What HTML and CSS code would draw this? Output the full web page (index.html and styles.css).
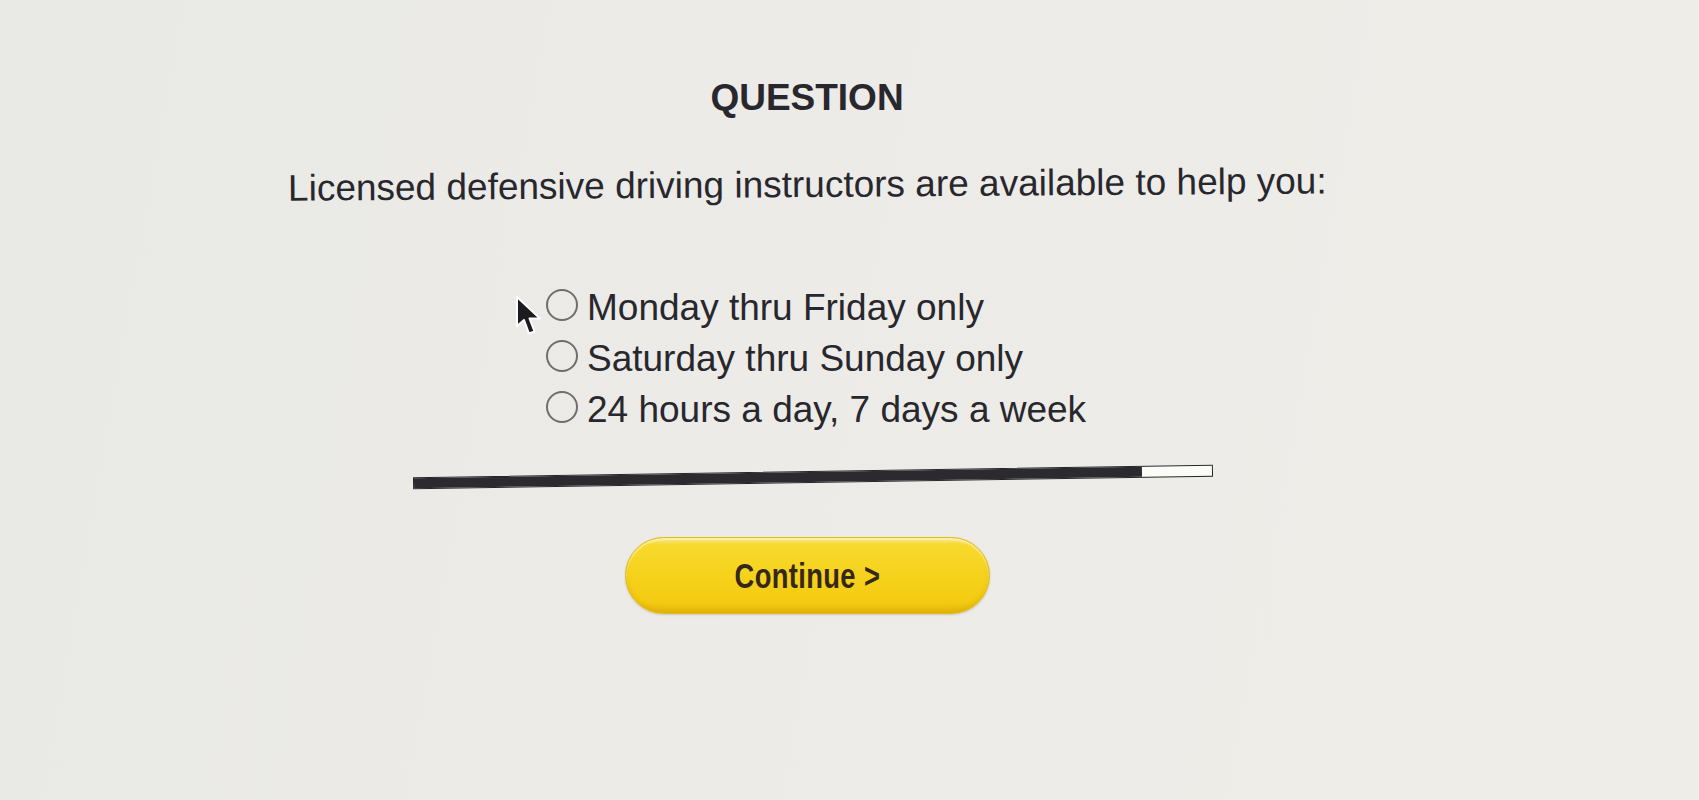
FILE: index.html
```html
<!DOCTYPE html>
<html lang="en">
<head>
<meta charset="utf-8">
<title>Question</title>
<link rel="stylesheet" href="styles.css">
</head>
<body>
<main class="quiz">
  <h1 class="title">QUESTION</h1>
  <p class="prompt">Licensed defensive driving instructors are available to help you:</p>
  <div class="options">
    <svg class="cursor" width="28" height="44" viewBox="0 0 28 44" aria-hidden="true">
      <path d="M2 2 L2 31 L9 25 L14 38.5 L19.5 36.5 L14.5 23.5 L25 23.5 Z" fill="#1c1c20" stroke="#ffffff" stroke-width="2" stroke-linejoin="round"/>
    </svg>
    <label class="option"><span class="radio"></span><span class="label">Monday thru Friday only</span></label>
    <label class="option"><span class="radio"></span><span class="label">Saturday thru Sunday only</span></label>
    <label class="option"><span class="radio"></span><span class="label">24 hours a day, 7 days a week</span></label>
  </div>
  <div class="progress"><div class="progress-fill" style="width: 91.25%"></div></div>
  <button class="continue" type="button"><span class="continue-text">Continue &gt;</span></button>
</main>
</body>
</html>
```

FILE: styles.css
```css
html, body {
  margin: 0;
  padding: 0;
}

body {
  width: 1699px;
  height: 800px;
  overflow: hidden;
  background: linear-gradient(100deg, #e9e9e6 0%, #ecebe7 45%, #eeede8 100%);
  font-family: "Liberation Sans", Arial, sans-serif;
  color: #28272d;
}

.quiz {
  width: 1046px;
  margin-left: 284px;
  padding-top: 76px;
  display: flex;
  flex-direction: column;
  align-items: center;
}

.title {
  margin: 0;
  font-size: 37px;
  line-height: 44px;
  font-weight: bold;
  letter-spacing: 0;
}

.prompt {
  margin: 43px 0 0;
  font-size: 37px;
  line-height: 44px;
  white-space: nowrap;
  transform: rotate(-0.4deg);
}

.options {
  position: relative;
  align-self: flex-start;
  margin-left: 262px;
  margin-top: 75px;
  display: flex;
  flex-direction: column;
}

.option {
  display: flex;
  align-items: center;
  height: 51px;
  font-size: 37px;
  line-height: 51px;
  white-space: nowrap;
}

.radio {
  width: 28px;
  height: 28px;
  border: 2px solid #6e6e70;
  border-radius: 50%;
  margin-right: 9px;
  margin-bottom: 6px;
  background: transparent;
  flex: none;
}

.cursor {
  position: absolute;
  left: -31px;
  top: 13px;
}

.progress {
  margin-top: 36px;
  margin-left: 12px;
  width: 798px;
  height: 10px;
  border: 1px solid #26252a;
  background: #fbfbf8;
  transform: rotate(-0.9deg);
}

.progress-fill {
  height: 100%;
  background: #2b2a2f;
}

.continue {
  margin-top: 54px;
  width: 365px;
  height: 77px;
  border: 1px solid #e2b81a;
  border-radius: 39px;
  background: linear-gradient(to bottom, #f7e68a 0%, #f7d92e 9%, #f6d21c 50%, #f4cb12 85%, #e7b90c 100%);
  box-shadow: inset 0 2px 2px rgba(255, 250, 200, 0.7), inset 0 -3px 4px rgba(210, 160, 0, 0.35), 0 1px 2px rgba(120, 100, 40, 0.25);
  padding: 0;
  display: flex;
  align-items: center;
  justify-content: center;
  cursor: pointer;
}

.continue-text {
  display: inline-block;
  font-family: "Liberation Sans", Arial, sans-serif;
  font-weight: bold;
  font-size: 35px;
  color: #35281a;
  transform: scaleX(0.78);
  letter-spacing: 0.5px;
}
```
